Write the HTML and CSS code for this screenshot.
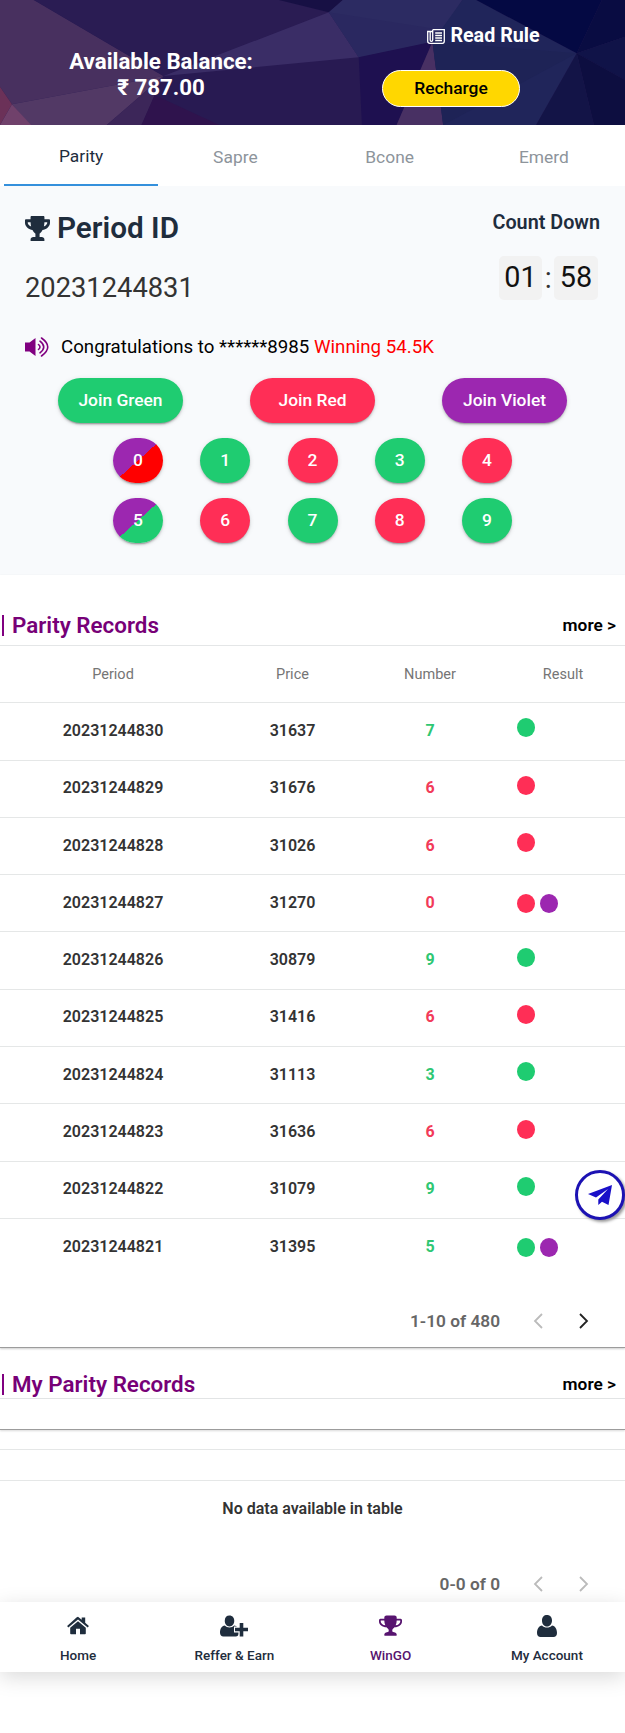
FILE: index.html
```html
<!DOCTYPE html>
<html lang="en">
<head>
<meta charset="utf-8">
<title>WinGO</title>
<link rel="stylesheet" href="styles.css">
</head>
<body>
<svg class="defs" aria-hidden="true">
  <symbol id="trophy" viewBox="0 0 1664 1664" preserveAspectRatio="none"><path d="M458 839Q384 677 384 480h-256v96q0 78 94.500 162t235.500 101zM1536 576v-96h-256q0 197-74 359 141-17 235.500-101t94.500-162zM1664 448v128q0 71-41.500 143t-112 130-173 97.500-215.500 44.500q-42 54-95 95-38 34-52.500 72.500t-14.500 89.500q0 54 30.500 91t97.500 37q75 0 133.500 45.500t58.500 114.500v64q0 14-9 23t-23 9h-832q-14 0-23-9t-9-23v-64q0-69 58.500-114.500t133.500-45.500q67 0 97.500-37t30.500-91q0-51-14.500-89.500t-52.500-72.500q-53-41-95-95-113-5-215.500-44.500t-173-97.500-112-130-41.500-143v-128q0-40 28-68t68-28h288v-96q0-66 47-113t113-47h576q66 0 113 47t47 113v96h288q40 0 68 28t28 68z" transform="translate(0 -64)"/></symbol>
  <symbol id="user" viewBox="0 0 20 22"><path d="M10 0c3 0 5 2.200 5 5.500S13 11.500 10 11.500 5 9 5 5.500 7 0 10 0zM5 10.500c1.300 1.400 3 2.100 5 2.100s3.700-.7 5-2.100c3.200.4 5 3.600 5 7.500 0 2.400-1.500 4-3.500 4h-13C1.500 22 0 20.400 0 18c0-3.900 1.800-7.100 5-7.500z"/></symbol>
</svg>

<header class="hero">
  <svg class="hero-art" viewBox="0 0 1568 375" preserveAspectRatio="none">
    <rect width="1568" height="375" fill="#281a52"/>
    <path d="M0 0H85L410 228 30 313 0 260z" fill="#48305f"/>
    <path d="M30 313L410 228 268 375H75z" fill="#523965"/>
    <path d="M0 260L30 313 0 375z" fill="#6b3158"/>
    <path d="M0 375L30 313 78 375z" fill="#70416b"/>
    <path d="M268 375L410 228 355 375z" fill="#3c2659"/>
    <path d="M388 285L550 375H355z" fill="#2f134d"/>
    <path d="M85 0H700L825 37 410 228z" fill="#2a1c53"/>
    <path d="M700 0H860L825 37z" fill="#171044"/>
    <path d="M825 37L900 172 410 228z" fill="#3a2d66"/>
    <path d="M825 37L860 0H1160L1130 55 1085 125 900 172z" fill="#2c2b62"/>
    <path d="M825 37L1110 90 1085 125 900 172z" fill="#2a2860"/>
    <path d="M900 172L1085 125 995 375H908z" fill="#1e1050"/>
    <path d="M1085 125L1112 375H995z" fill="#483063"/>
    <path d="M1160 0H1195L1447 160 1345 375H1112L1085 125z" fill="#20255a"/>
    <path d="M1085 125L1447 160 1112 375z" fill="#1e2356"/>
    <path d="M1195 0H1510L1447 160z" fill="#040943"/>
    <path d="M1510 0H1568V110L1447 160z" fill="#090c42"/>
    <path d="M1447 160L1568 110V240z" fill="#101348"/>
    <path d="M1447 160L1568 240V375H1490z" fill="#0d0e40"/>
    <path d="M1447 160L1490 375H1345z" fill="#131447"/>
  </svg>
  <div class="balance">Available Balance:<br>₹ 787.00</div>
  <div class="hero-actions">
    <a class="rule"><svg width="18" height="15" viewBox="0 0 18 15" fill="none" stroke="#fff" stroke-width="1.300"><path d="M5.700.7H17.300V12q0 2.300-2 2.300H3q-2.300 0-2.300-2V2.500H5.700M3.200 2.500V11q0 1.300 1.200 1.300T5.700 11V.7"/><path d="M8.200 4h6.800M8.200 6.500h6.800M8.200 9h6.800M8.200 11.500h6.800" stroke-width="1.500"/></svg>Read Rule</a>
    <button class="recharge">Recharge</button>
  </div>
</header>

<nav class="tabs"><a class="active">Parity</a><a>Sapre</a><a>Bcone</a><a>Emerd</a></nav>

<section class="panel">
  <div class="panel-top">
    <div>
      <h1><svg width="25" height="25" viewBox="0 0 576 512" preserveAspectRatio="none"><path d="M552 64H448V24c0-13.300-10.700-24-24-24H152c-13.300 0-24 10.700-24 24v40H24C10.700 64 0 74.700 0 88v56c0 35.700 22.500 72.400 61.900 100.700 31.500 22.700 69.800 37.100 110 41.700C203.300 338.500 240 360 240 360v72h-48c-35.300 0-64 20.700-64 56v12c0 6.600 5.400 12 12 12h296c6.600 0 12-5.400 12-12v-12c0-35.300-28.700-56-64-56h-48v-72s36.700-21.500 68.100-73.600c40.300-4.600 78.600-19 110-41.700 39.300-28.300 61.900-65 61.900-100.700V88c0-13.300-10.700-24-24-24zM99.300 192.800C74.900 175.200 64 155.600 64 144v-16h64.200c1 32.600 5.800 61.200 12.800 86.200-15.100-5.200-29.200-12.400-41.700-21.400zM512 144c0 16.100-17.700 36.100-35.300 48.800-12.500 9-26.700 16.200-41.800 21.400 7-25 11.800-53.600 12.800-86.200H512v16z"/></svg>Period ID</h1>
      <div class="period">20231244831</div>
    </div>
    <div class="count">
      <h2>Count Down</h2>
      <div class="timer"><span>01</span>:<span>58</span></div>
    </div>
  </div>
  <div class="notice">
    <svg width="24" height="22" viewBox="0 0 24 22" fill="none" stroke="#800080" stroke-width="1.600" stroke-linecap="round"><path d="M0 6.500H4.500L10.500 2V20L4.500 15.500H0z" fill="#800080" stroke="none"/><path d="M13.500 8.500q3 2.500 0 5M15 5.200q7.500 5.800 0 11.600M16.500 2q12.500 9 0 18"/></svg>
    <span>Congratulations to ******8985 <b>Winning 54.5K</b></span>
  </div>
  <div class="joins"><button class="green">Join Green</button><button class="red">Join Red</button><button class="violet">Join Violet</button></div>
  <div class="numbers">
    <button class="violet-red">0</button><button class="green">1</button><button class="red">2</button><button class="green">3</button><button class="red">4</button>
    <button class="violet-green">5</button><button class="red">6</button><button class="green">7</button><button class="red">8</button><button class="green">9</button>
  </div>
</section>

<section class="records">
  <div class="section-head"><h3>Parity Records</h3><a>more &gt;</a></div>
  <div class="row head"><span>Period</span><span>Price</span><span>Number</span><span>Result</span></div>
  <div class="row"><span>20231244830</span><span>31637</span><span class="g">7</span><span class="dots"><i class="green"></i></span></div>
  <div class="row"><span>20231244829</span><span>31676</span><span class="r">6</span><span class="dots"><i class="red"></i></span></div>
  <div class="row"><span>20231244828</span><span>31026</span><span class="r">6</span><span class="dots"><i class="red"></i></span></div>
  <div class="row"><span>20231244827</span><span>31270</span><span class="r">0</span><span class="dots two"><i class="red"></i><i class="violet"></i></span></div>
  <div class="row"><span>20231244826</span><span>30879</span><span class="g">9</span><span class="dots"><i class="green"></i></span></div>
  <div class="row"><span>20231244825</span><span>31416</span><span class="r">6</span><span class="dots"><i class="red"></i></span></div>
  <div class="row"><span>20231244824</span><span>31113</span><span class="g">3</span><span class="dots"><i class="green"></i></span></div>
  <div class="row"><span>20231244823</span><span>31636</span><span class="r">6</span><span class="dots"><i class="red"></i></span></div>
  <div class="row"><span>20231244822</span><span>31079</span><span class="g">9</span><span class="dots"><i class="green"></i></span></div>
  <div class="row last"><span>20231244821</span><span>31395</span><span class="g">5</span><span class="dots two"><i class="green"></i><i class="violet"></i></span></div>
  <div class="pager"><span>1-10 of 480</span><svg class="off" width="10" height="16" viewBox="0 0 10 16"><path d="M9 1L2 8l7 7"/></svg><svg width="10" height="16" viewBox="0 0 10 16"><path d="M1 1l7 7-7 7"/></svg></div>
</section>

<section class="mine">
  <div class="section-head"><h3>My Parity Records</h3><a>more &gt;</a></div>
  <div class="strip shade"></div>
  <div class="strip short"></div>
  <div class="strip"></div>
  <div class="empty">No data available in table</div>
  <div class="pager"><span>0-0 of 0</span><svg class="off" width="10" height="16" viewBox="0 0 10 16"><path d="M9 1L2 8l7 7"/></svg><svg class="off" width="10" height="16" viewBox="0 0 10 16"><path d="M1 1l7 7-7 7"/></svg></div>
</section>

<nav class="bottom">
  <a><svg width="22" height="22" viewBox="0 0 22 22"><path d="M11 6.200L18.800 12.700v5.800q0 .8-.8.8H13v-5.500H9v5.500H4q-.8 0-.8-.8V12.700z"/><path d="M11 1.700l3.700 3.100V2.500h3.500v5.300l3.700 3.200-1.200 1.500L11 4.400 1.300 12.500.1 11 9.800 2.200Q11 1.200 12.200 2.200z"/></svg>Home</a>
  <a><svg width="28" height="22" viewBox="0 0 28 22"><use href="#user" width="19" height="22"/><path d="M18.500 7h6v4.500h4.500v6h-4.500v5h-6v-5H14v-6h4.500z" fill="#fff"/><path d="M19.700 8h3.600v4.800h4.700v3.400h-4.700v5.300h-3.600v-5.300H15v-3.400h4.700z"/></svg>Reffer &amp; Earn</a>
  <a class="current"><svg width="23" height="22"><use href="#trophy"/></svg>WinGO</a>
  <a><svg width="20" height="22"><use href="#user"/></svg>My Account</a>
</nav>

<a class="telegram"><svg width="24" height="20" viewBox="0 0 24 20"><path d="M24 0L20.500 20 14 16.800 10.300 20V14.500L20 4 8 12.500 0 9z"/></svg></a>
</body>
</html>
```
FILE: styles.css
```css
* { box-sizing: border-box; }
body { margin: 0; height: 1733px; background: #fff; font-family: Roboto, sans-serif; color: #000; overflow: hidden; }
h1, h2, h3 { margin: 0; font-weight: 600; }
button { border: 0; padding: 0 0 2px; font: 500 17.400px Roboto, sans-serif; color: #fff; }
svg { display: block; flex: none; fill: currentColor; }
.defs { position: absolute; width: 0; height: 0; }

.hero { position: relative; height: 125px; display: flex; color: #fff; }
.hero-art { position: absolute; inset: 0; width: 100%; height: 100%; z-index: -1; }
.balance { width: 322px; padding-top: 48px; text-align: center; font-weight: 700; font-size: 22.300px; line-height: 26px; }
.hero-actions { width: 258px; padding-top: 25px; display: flex; flex-direction: column; align-items: center; gap: 23px; }
.rule { display: flex; align-items: center; gap: 5px; font-weight: 700; font-size: 19.700px; line-height: 22px; margin-left: 65px; }
.rule svg { fill: none; }
.recharge { width: 138px; height: 37px; border: 1px solid #fff; border-radius: 19px; background: #ffd700; color: #000; }

.tabs { display: flex; height: 61px; padding: 0 4px; }
.tabs a { width: 154.400px; height: 61px; text-align: center; font-size: 17.400px; line-height: 64px; color: #8d949b; }
.tabs .active { line-height: 62px; color: #1f2d3d; border-bottom: 2px solid #3490dc; }

.panel { height: 389px; padding: 25px 25px 0; background: #f8fafc; }
.panel-top { display: flex; justify-content: space-between; height: 115px; }
h1 { display: flex; align-items: center; gap: 7px; font-size: 29.700px; line-height: 34px; color: #1f2d3d; }
.period { margin-top: 26px; font-size: 27.300px; line-height: 34px; color: #333; }
h2 { padding-top: 1px; font-size: 19.800px; line-height: 22px; color: #1f2d3d; }
.timer { display: flex; align-items: center; justify-content: center; gap: 2.500px; margin: 22px 0 0 4px; font-size: 28.800px; line-height: 42px; color: #333; }
.timer span { width: 43.500px; height: 44px; border-radius: 5px; background: #f2f2f2; text-align: center; color: #111; }
.notice { display: flex; align-items: center; gap: 12px; height: 42px; font-size: 18.700px; }
.notice svg { fill: none; }
.notice b { font-weight: 400; color: #f00; }
.joins { display: flex; justify-content: space-between; margin: 10px 33px 15px; }
.joins button, .numbers button { height: 45px; border-radius: 23px; box-shadow: 0 3px 1px -2px rgba(0,0,0,.2), 0 2px 2px rgba(0,0,0,.14), 0 1px 5px rgba(0,0,0,.12); }
.joins button { width: 125px; }
.numbers { display: grid; grid-template-columns: repeat(5, 50px); justify-content: space-between; row-gap: 15px; margin: 0 88px; }
.green { background: #1fcc71; }
.red { background: #ff2e56; }
.violet { background: #9c27b0; }
.violet-red { background: linear-gradient(to bottom right, #9c27b0 50%, red 50%); }
.violet-green { background: linear-gradient(to bottom right, #9c27b0 50%, #1fcc71 50%); }

.records { padding-top: 30px; height: 773px; border-bottom: 1px solid #9c9c9c; box-shadow: 0 1px 2px rgba(0,0,0,.2); }
.section-head { display: flex; align-items: center; justify-content: space-between; height: 41px; padding: 0 9px 0 2px; border-bottom: 1px solid #e4e6e7; }
.section-head h3 { border-left: 2px solid #800080; padding-left: 8px; font-size: 22.400px; line-height: 21px; color: #770077; }
.section-head a { font-weight: 600; font-size: 17.300px; }
.row { display: grid; grid-template-columns: 226px 133px 142px 124px; align-items: center; height: 57.300px; padding-bottom: 2px; border-bottom: 1px solid #e5e7e7; text-align: center; font-weight: 600; font-size: 16px; color: #333; }
.head { font-weight: 400; font-size: 14.500px; color: #757575; padding: 0; }
.last { border: 0; }
.g, .r { font-weight: 700; }
.g { color: #2fc773; }
.r { color: #f23a59; }
.dots { display: flex; gap: 4.500px; padding: 0 0 5px 16px; }
.dots.two { padding: 2px 0 0 16px; }
.dots i { width: 18px; height: 19px; border-radius: 50%; }
.pager { display: flex; align-items: center; padding-left: 410px; font-weight: 600; font-size: 17.300px; color: #666; height: 50px; }
.pager span { width: 90px; text-align: right; white-space: nowrap; }
.pager svg { fill: none; stroke: #222; stroke-width: 1.800; }
.pager .off { stroke: #bbb; }
.pager span + svg { margin: 0 36px 0 33px; }
.records .pager { margin-top: 20px; }

.mine { padding-top: 22px; }
.mine .section-head { height: 29px; }
.strip { height: 31px; border-bottom: 1px solid #e5e7e7; }
.strip.shade { border-color: #9c9c9c; box-shadow: 0 1px 2px rgba(0,0,0,.15); }
.strip.short { height: 20px; }
.empty { height: 56px; line-height: 56px; text-align: center; font-weight: 600; font-size: 16px; color: #333; }
.mine .pager { margin-top: 25px; height: 43px; }

.bottom { position: absolute; top: 1602px; left: 0; width: 625px; height: 70px; display: flex; background: #fff; box-shadow: 0 5px 20px rgba(0,0,0,.15); }
.bottom a { flex: 1; display: flex; flex-direction: column; align-items: center; gap: 10px; padding-top: 13px; font-weight: 500; font-size: 13.500px; line-height: 16px; color: #1f2d3d; }
.bottom .current { color: #57146f; }
.telegram { position: absolute; top: 1170px; left: 575px; width: 50px; height: 50px; display: grid; place-items: center; border: 3px solid #1c12b3; border-radius: 50%; background: #fff; color: #190fc8; box-shadow: 2px 2px 3px #999; }
```
